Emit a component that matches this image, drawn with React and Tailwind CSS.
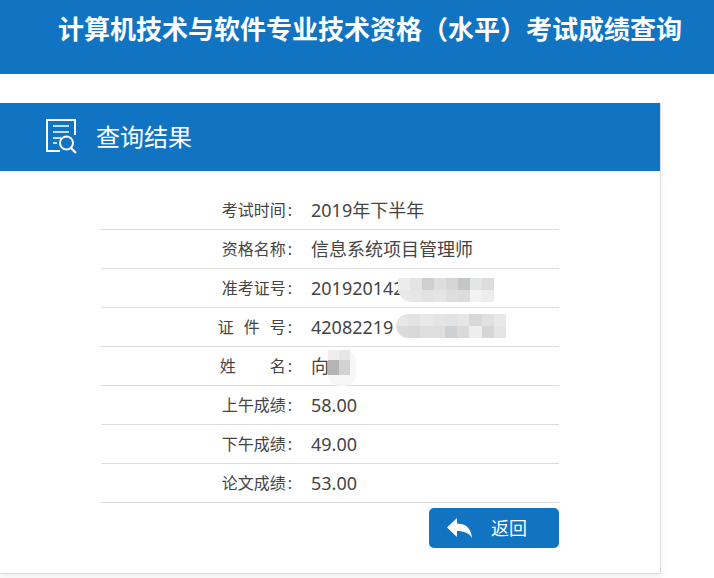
const font = { fontFamily: '"Noto Sans", "Noto Sans CJK SC", sans-serif' };

function Mosaic({ className, cols, cells }) {
  return (
    <div className={`absolute grid overflow-hidden ${className}`} style={{ gridTemplateColumns: `repeat(${cols}, 1fr)` }}>
      {cells.map((c, i) => (
        <div key={i} style={{ background: c }} />
      ))}
    </div>
  );
}

const Colon = () => <span className="ml-[2px]">:</span>;

const rows = [
  [<>考试时间<Colon /></>, '2019年下半年'],
  [<>资格名称<Colon /></>, '信息系统项目管理师'],
  [<>准考证号<Colon /></>, '201920142', 'a'],
  [<><span className="tracking-[10px]">证件</span>号<Colon /></>, '42082219', 'b'],
  [<><span className="tracking-[34px]">姓</span>名<Colon /></>, '向', 'c'],
  [<>上午成绩<Colon /></>, '58.00'],
  [<>下午成绩<Colon /></>, '49.00'],
  [<>论文成绩<Colon /></>, '53.00'],
];

function Patch({ kind }) {
  if (kind === 'a')
    return (
      <Mosaic
        className="left-[297px] top-[9px] h-6 w-[96px] rounded-bl-[14px] grid-rows-2"
        cols={8}
        cells={['#ececec','#e4e4e4','#cfcfcf','#dedede','#d6d6d6','#c6c6c6','#e2e5e6','#dcdcdc','#e8e8e8','#e6e6e6','#e2e2e2','#e4e4e4','#dedede','#dcdcdc','#f2f2f2','#ededed']}
      />
    );
  if (kind === 'b')
    return (
      <Mosaic
        className="left-[295px] top-[6px] h-6 w-[110px] rounded-l-[14px] grid-rows-2"
        cols={9}
        cells={['#e6e6e6','#e2e2e2','#e8e8e8','#e4e4e4','#e0e2e4','#e6e6e6','#d8d8d8','#e0e0e2','#e8e8e8','#dcdcdc','#d8d8d8','#dedede','#dedede','#cdd1d4','#dadada','#efeeec','#d6d6d6','#e4e4e4']}
      />
    );
  return (
    <>
      <div className="absolute left-[227px] top-[3px] h-[36px] w-[28px] rounded-[12px] bg-[#f6f6f6]" />
      <Mosaic
        className="left-[227px] top-[3px] h-[25px] w-[22px] grid-rows-[10px_15px]"
        cols={2}
        cells={['#eeeeee', '#e6e6e6', '#b4b4b4', '#d2d2d2']}
      />
    </>
  );
}

export default function App() {
  return (
    <div className="h-[578px] w-[714px] overflow-hidden bg-white" style={font}>
      <header className="flex h-[74px] items-start bg-[#1174c3] pl-[58px] pt-[10px]">
        <h1 className="text-[26px] font-bold leading-[38px] whitespace-nowrap text-white">
          计算机技术与软件专业技术资格（水平）考试成绩查询
        </h1>
      </header>

      <section className="mt-[29px] h-[471px] w-[661px] border-r border-b border-[#dddddd] bg-white shadow-[0_4px_6px_#f0f0f0]">
        <div className="flex h-[68px] items-center bg-[#1174c3] pl-[46px] text-white">
          <svg width="32" height="36" viewBox="0 0 32 36" fill="none" stroke="white" strokeWidth="2" className="mr-[18px]">
            <path d="M14 32H1V1h28v15" />
            <path d="M7 7h16M7 13h16M7 19h8M7 24h4" strokeWidth="1.6" />
            <circle cx="20.5" cy="24" r="6.5" />
            <path d="M25 29l5 5" strokeWidth="2.2" />
          </svg>
          <h2 className="text-2xl font-normal leading-8">查询结果</h2>
        </div>

        <div className="mx-auto w-[458px] pt-5">
          {rows.map(([label, value, patch], i) => (
            <div key={i} className="relative flex h-[39px] items-center border-b border-[#dddddd]">
              <span className="w-[191px] text-right text-base whitespace-pre text-[#444444]">{label}</span>
              <span className="ml-[19px] text-[18px] leading-6 text-[#444444]">{value}</span>
              {patch && <Patch kind={patch} />}
            </div>
          ))}
          <div className="mt-[5px] flex justify-end">
            <button className="flex h-10 w-[130px] items-center rounded-[5px] bg-[#1174c3] pl-[18px] text-[18px] text-white">
              <svg width="25" height="20" viewBox="0 0 25 20" fill="white" className="mr-[19px]">
                <path d="M0 9.5 10 0v5.5c8 0 14 4 15 14.5-3-5-8-7-15-7v6z" />
              </svg>
              返回
            </button>
          </div>
        </div>
      </section>
    </div>
  );
}
